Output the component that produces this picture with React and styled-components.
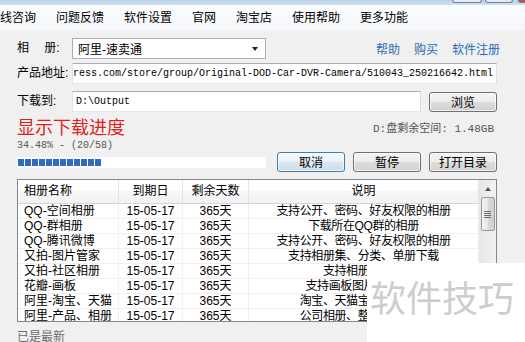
import React from "react";
import styled, { createGlobalStyle } from "styled-components";

const GlobalStyle = createGlobalStyle`
  body { margin: 0; background: #f0f0f0; }
  * { box-sizing: border-box; }
`;

const Window = styled.div`
  position: relative;
  width: 525px;
  height: 342px;
  overflow: hidden;
  background: #f0f0f0;
  font-family: "Liberation Sans", "Noto Sans CJK SC", sans-serif;
  font-size: 12px;
  color: #000;
`;

const TitleStrip = styled.div`
  height: 5px;
  display: flex;
  justify-content: flex-end;
  background: linear-gradient(#bcd1e8, #d2e1f1);
`;

const WinButton = styled.div`
  width: ${(p) => p.w}px;
  height: 3px;
  margin-right: ${(p) => p.mr}px;
  border: 1px solid #6f819a;
  border-top: none;
  border-radius: 0 0 3px 3px;
  background: ${(p) => (p.close ? "#c9504a" : "#e3ebf5")};
`;

const MenuBar = styled.div`
  height: 26px;
  display: flex;
  align-items: center;
  background: linear-gradient(#fcfdfe, #f4f6f9);
  & > span:first-child {
    margin-left: -22px;
  }
`;

const MenuItem = styled.span`
  padding: 0 10px;
  line-height: 26px;
  white-space: nowrap;
`;

const Content = styled.div`
  display: flex;
  flex-direction: column;
  padding: 7px 28px 0 17px;
`;

const FieldRow = styled.div`
  display: flex;
  align-items: center;
  height: 21px;
  margin-top: ${(p) => p.mt || 0}px;
`;

const Label = styled.span`
  flex: none;
  width: 55px;
  line-height: 21px;
  white-space: pre;
`;

const Select = styled.div`
  width: 194px;
  height: 21px;
  display: flex;
  align-items: center;
  padding: 0 5px 0 5px;
  background: #fff;
  border: 1px solid #a9aeb6;
`;

const Arrow = styled.span`
  margin-left: auto;
  margin-right: 2px;
  width: 0;
  height: 0;
  border-left: 3.5px solid transparent;
  border-right: 3.5px solid transparent;
  border-top: 4px solid #222;
`;

const Links = styled.div`
  display: flex;
  gap: 14px;
  margin-left: auto;
  margin-right: -3px;
  color: #2b6cb5;
`;

const TextBox = styled.div`
  flex: 1;
  height: 21px;
  display: flex;
  align-items: center;
  justify-content: ${(p) => (p.end ? "flex-end" : "flex-start")};
  overflow: hidden;
  padding: 0 3px;
  background: #fff;
  border: 1px solid #abadb3;
  border-color: #abadb3 #dbdfe6 #e3e9ef #e2e3ea;
  font-family: "Liberation Mono", monospace;
  font-size: 10px;
  white-space: nowrap;
  margin-right: ${(p) => p.mr || 0}px;
`;

const Button = styled.button`
  flex: none;
  width: 68px;
  height: 20px;
  padding: 0;
  font-family: "Noto Sans CJK SC", sans-serif;
  font-size: 12px;
  line-height: 18px;
  color: #000;
  border: 1px solid ${(p) => (p.focused ? "#3c7fb1" : "#707070")};
  border-radius: 3px;
  background: ${(p) =>
    p.focused
      ? "linear-gradient(#f4f9fd, #e9f2f9 50%, #dae6f0 50%, #d0dce8)"
      : "linear-gradient(#f4f4f4, #ececec 50%, #dddddd 50%, #d2d2d2)"};
  box-shadow: inset 0 0 0 1px rgba(255, 255, 255, 0.7);
`;

const ProgressTop = styled.div`
  display: flex;
  align-items: center;
  justify-content: space-between;
  height: 19px;
  margin-top: 5px;
`;

const RedTitle = styled.span`
  font-family: "Noto Sans CJK SC", sans-serif;
  font-size: 18px;
  line-height: 19px;
  color: #e01e1e;
`;

const DiskFree = styled.span`
  margin-right: 3px;
  font-family: "Liberation Mono", "Noto Sans CJK SC", monospace;
  font-size: 11px;
  color: #555;
`;

const Percent = styled.div`
  margin-top: 3px;
  height: 12px;
  line-height: 14px;
  font-family: "Liberation Mono", monospace;
  font-size: 10px;
  color: #555;
`;

const ProgressRow = styled.div`
  display: flex;
  align-items: center;
  height: 20px;
  margin-top: 1px;
`;

const Track = styled.div`
  flex: 1;
  height: 11px;
  margin-right: 11px;
  padding: 2px 1px;
  display: flex;
  gap: 1px;
  background: #fff;
`;

const Block = styled.span`
  width: 6px;
  height: 7px;
  background: #2f6bbf;
`;

const ButtonGroup = styled.div`
  display: flex;
  gap: 8px;
`;

const Table = styled.div`
  margin-top: 7px;
  height: 143px;
  display: flex;
  background: #fff;
  border: 1px solid #828790;
`;

const ListArea = styled.div`
  flex: 1;
  display: flex;
  flex-direction: column;
  overflow: hidden;
`;

const cols = "101px 64px 66px 1fr";

const HeaderRow = styled.div`
  display: grid;
  grid-template-columns: ${cols};
  height: 24px;
  border-bottom: 1px solid #d5d5d5;
  background: linear-gradient(#ffffff, #ffffff 50%, #f6f7f9 50%, #f1f2f4);
`;

const HeaderCell = styled.div`
  line-height: 23px;
  padding-left: ${(p) => (p.left ? 6 : 0)}px;
  text-align: ${(p) => (p.left ? "left" : "center")};
  border-right: 1px solid #e3e4e6;
  white-space: nowrap;
`;

const BodyRow = styled.div`
  display: grid;
  grid-template-columns: ${cols};
  height: 15px;
  border-bottom: 1px solid #f0f0f0;
  flex: none;
`;

const Cell = styled.div`
  line-height: 14px;
  padding-left: ${(p) => (p.left ? 6 : 0)}px;
  text-align: ${(p) => (p.left ? "left" : "center")};
  letter-spacing: ${(p) => (p.tight ? "-0.4px" : "0")};
  border-right: 1px solid #f0f0f0;
  white-space: nowrap;
  overflow: hidden;
`;

const ScrollBar = styled.div`
  width: 17px;
  flex: none;
  display: flex;
  flex-direction: column;
  align-items: center;
  background: linear-gradient(to right, #e6e6e6, #f2f2f2);
`;

const ScrollUp = styled.div`
  height: 17px;
  width: 100%;
  display: flex;
  align-items: center;
  justify-content: center;
  &::after {
    content: "";
    border-left: 3.5px solid transparent;
    border-right: 3.5px solid transparent;
    border-bottom: 4px solid #555;
  }
`;

const Thumb = styled.div`
  width: 14px;
  height: 34px;
  display: flex;
  flex-direction: column;
  align-items: center;
  justify-content: center;
  gap: 1px;
  border: 1px solid #979797;
  border-radius: 2px;
  background: linear-gradient(to right, #f5f5f5, #e6e6e6 50%, #d9d9d9 50%, #d0d0d0);
`;

const Grip = styled.span`
  width: 7px;
  height: 1px;
  background: #6a6a6a;
`;

const Status = styled.div`
  margin-top: 7px;
  line-height: 16px;
  color: #6b6b6b;
`;

const Watermark = styled.div`
  position: absolute;
  right: 0;
  bottom: 0;
  width: 158px;
  height: 79px;
  padding: 15px 0 0 3px;
  background: #fff;
  font-family: "Noto Sans CJK SC", sans-serif;
  font-size: 36px;
  line-height: 36px;
  color: #cdcdcd;
  white-space: nowrap;
`;

const menus = ["在线咨询", "问题反馈", "软件设置", "官网", "淘宝店", "使用帮助", "更多功能"];

const rows = [
  ["QQ-空间相册", "支持公开、密码、好友权限的相册"],
  ["QQ-群相册", "下载所在QQ群的相册"],
  ["QQ-腾讯微博", "支持公开、密码、好友权限的相册"],
  ["又拍-图片管家", "支持相册集、分类、单册下载"],
  ["又拍-社区相册", "支持相册集下载"],
  ["花瓣-画板", "支持画板图片批量下载"],
  ["阿里-淘宝、天猫", "淘宝、天猫宝贝图片下载"],
  ["阿里-产品、相册", "公司相册、整店宝贝下载"],
];

export default function App() {
  return (
    <Window>
      <GlobalStyle />
      <TitleStrip>
        <WinButton w={30} mr={3} />
        <WinButton w={28} mr={5} />
        <WinButton w={40} mr={-33} close />
      </TitleStrip>
      <MenuBar>
        {menus.map((m) => (
          <MenuItem key={m}>{m}</MenuItem>
        ))}
      </MenuBar>
      <Content>
        <FieldRow>
          <Label>{"相\u3000 册:"}</Label>
          <Select>
            阿里-速卖通
            <Arrow />
          </Select>
          <Links>
            <span>帮助</span>
            <span>购买</span>
            <span>软件注册</span>
          </Links>
        </FieldRow>
        <FieldRow mt={4}>
          <Label>产品地址:</Label>
          <TextBox end>
            http://www.aliexpress.com/store/group/Original-DOD-Car-DVR-Camera/510043_250216642.html
          </TextBox>
        </FieldRow>
        <FieldRow mt={7}>
          <Label>下载到:</Label>
          <TextBox mr={8}>D:\Output</TextBox>
          <Button>浏览</Button>
        </FieldRow>
        <ProgressTop>
          <RedTitle>显示下载进度</RedTitle>
          <DiskFree>D:盘剩余空间: 1.48GB</DiskFree>
        </ProgressTop>
        <Percent>34.48% - (20/58)</Percent>
        <ProgressRow>
          <Track>
            {Array.from({ length: 12 }).map((_, i) => (
              <Block key={i} />
            ))}
          </Track>
          <ButtonGroup>
            <Button focused>取消</Button>
            <Button>暂停</Button>
            <Button>打开目录</Button>
          </ButtonGroup>
        </ProgressRow>
        <Table>
          <ListArea>
            <HeaderRow>
              <HeaderCell left>相册名称</HeaderCell>
              <HeaderCell>到期日</HeaderCell>
              <HeaderCell>剩余天数</HeaderCell>
              <HeaderCell>说明</HeaderCell>
            </HeaderRow>
            {rows.map(([name, desc]) => (
              <BodyRow key={name}>
                <Cell left>{name}</Cell>
                <Cell>15-05-17</Cell>
                <Cell>365天</Cell>
                <Cell tight>{desc}</Cell>
              </BodyRow>
            ))}
          </ListArea>
          <ScrollBar>
            <ScrollUp />
            <Thumb>
              <Grip />
              <Grip />
              <Grip />
              <Grip />
            </Thumb>
          </ScrollBar>
        </Table>
        <Status>已是最新</Status>
      </Content>
      <Watermark>软件技巧</Watermark>
    </Window>
  );
}
